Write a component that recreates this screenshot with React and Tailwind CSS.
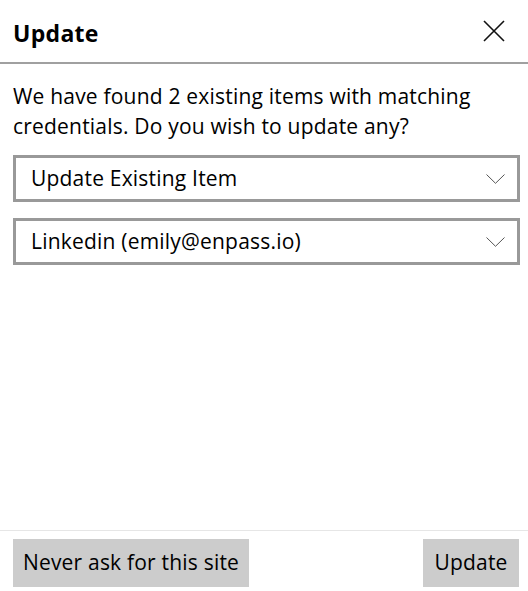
import React from 'react';

const Chevron = () => (
  <svg width="19" height="10" viewBox="0 0 19 10" fill="none" className="shrink-0">
    <path d="M0.5 0.5 L9.5 9.3 L18.5 0.5" stroke="#555" strokeWidth="1" />
  </svg>
);

const SelectBox = ({ label }) => (
  <div className="flex h-[47px] items-center justify-between border-[3px] border-[#999999] bg-white pl-[15px] pr-[12px]">
    <span className="text-[21px] leading-none tracking-[0.2px] text-black">{label}</span>
    <Chevron />
  </div>
);

const App = () => {
  return (
    <div
      className="flex h-[591px] w-[528px] flex-col bg-white text-black"
      style={{ fontFamily: '"Segoe UI", "Open Sans", "Noto Sans", sans-serif' }}
    >
      {/* Header */}
      <div className="flex h-[64px] shrink-0 items-center justify-between border-b-2 border-[#a0a0a0] pl-[13px] pr-[23px]">
        <h1 className="pt-[4px] text-[23px] font-bold leading-none tracking-[0.3px]">Update</h1>
        <button className="flex h-[22px] w-[22px] items-center justify-center">
          <svg width="22" height="22" viewBox="0 0 22 22" fill="none">
            <path d="M1 1 L21 21 M21 1 L1 21" stroke="#111" strokeWidth="1.6" />
          </svg>
        </button>
      </div>

      {/* Body */}
      <div className="flex flex-1 flex-col px-[13px] pr-[8px] pt-[17px]">
        <p className="text-[21px] leading-[30px] tracking-[0.2px] pr-[30px]">
          We have found 2 existing items with matching credentials. Do you wish to update any?
        </p>
        <div className="mt-[14px] flex flex-col gap-[16px]">
          <SelectBox label="Update Existing Item" />
          <SelectBox label="Linkedin (emily@enpass.io)" />
        </div>
      </div>

      {/* Footer */}
      <div className="flex shrink-0 items-center justify-between border-t border-[#e6e6e6] pl-[13px] pr-[9px] pt-[8px] pb-[4px]">
        <button className="h-[48px] w-[236px] bg-[#cccccc] text-[21px] tracking-[0.2px]">Never ask for this site</button>
        <button className="h-[48px] w-[96px] bg-[#cccccc] text-[21px] tracking-[0.2px]">Update</button>
      </div>
    </div>
  );
};

export default App;
